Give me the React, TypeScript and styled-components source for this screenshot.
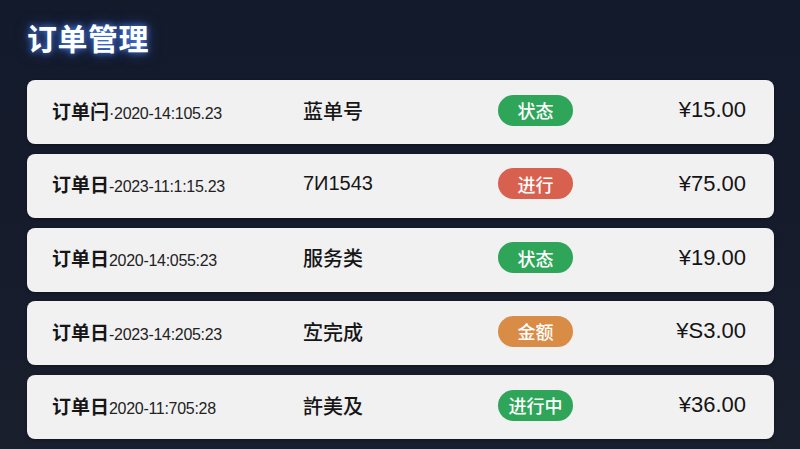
import styled, { createGlobalStyle } from "styled-components"

const GlobalStyle = createGlobalStyle`
  html, body {
    margin: 0;
    padding: 0;
    background: #141a29;
  }
  body {
    font-family: "Liberation Sans", "Noto Sans CJK SC", sans-serif;
  }
`

const Page = styled.div`
  width: 800px;
  height: 449px;
  box-sizing: border-box;
  padding: 20px 26px 0 27px;
  background: linear-gradient(180deg, #131a2b 0%, #161c2c 60%, #1a1f2d 100%);
  overflow: hidden;
`

const Title = styled.h1`
  margin: 0 0 17px 0;
  height: 43px;
  line-height: 40px;
  font-size: 30px;
  font-weight: 700;
  color: #ffffff;
  letter-spacing: 0.5px;
  text-shadow: 0 0 6px rgba(80, 140, 255, 0.9), 0 0 14px rgba(60, 110, 230, 0.6);
`

const List = styled.div`
  display: flex;
  flex-direction: column;
  gap: 9.75px;
`

const Card = styled.div`
  display: grid;
  grid-template-columns: 251px 195px 1fr auto;
  align-items: center;
  height: 64px;
  padding: 0 28px 4px 25px;
  box-sizing: border-box;
  background: #f1f1f2;
  border-radius: 8px;
  box-shadow: 0 1px 3px rgba(0, 0, 0, 0.35);
`

const OrderCell = styled.div`
  display: flex;
  align-items: baseline;
  color: #161616;
  white-space: nowrap;
`

const OrderLabel = styled.span`
  font-size: 19px;
  font-weight: 600;
`

const OrderDate = styled.span`
  font-size: 16px;
  letter-spacing: -0.3px;
  color: #222;
`

const Name = styled.div`
  font-size: 20px;
  font-weight: 500;
  color: #161616;
`

const Badge = styled.span<{ $color: string }>`
  display: inline-flex;
  align-items: center;
  justify-content: center;
  width: 75px;
  height: 31px;
  border-radius: 16px;
  background: ${props => props.$color};
  color: #fff;
  font-size: 18px;
  font-weight: 500;
`

const Price = styled.div`
  font-size: 22px;
  color: #141414;
  text-align: right;
`

const colors = {
  green: "#2fa55a",
  red: "#d8604f",
  orange: "#d98c46",
}

const orders = [
  { label: "订单闩", date: "·2020-14:105.23", name: "蓝单号", status: "状态", color: colors.green, price: "¥15.00" },
  { label: "订单日", date: "-2023-11:1:15.23", name: "7И1543", status: "进行", color: colors.red, price: "¥75.00" },
  { label: "订单日", date: " 2020-14:055:23", name: "服务类", status: "状态", color: colors.green, price: "¥19.00" },
  { label: "订单日", date: "-2023-14:205:23", name: "宐完成", status: "金额", color: colors.orange, price: "¥S3.00" },
  { label: "订单日", date: " 2020-11:705:28", name: "許美及", status: "进行中", color: colors.green, price: "¥36.00" },
]

export default function App() {
  return (
    <>
      <GlobalStyle />
      <Page>
        <Title>订单管理</Title>
        <List>
          {orders.map((o, i) => (
            <Card key={i}>
              <OrderCell>
                <OrderLabel>{o.label}</OrderLabel>
                <OrderDate>{o.date}</OrderDate>
              </OrderCell>
              <Name>{o.name}</Name>
              <div>
                <Badge $color={o.color}>{o.status}</Badge>
              </div>
              <Price>{o.price}</Price>
            </Card>
          ))}
        </List>
      </Page>
    </>
  )
}
